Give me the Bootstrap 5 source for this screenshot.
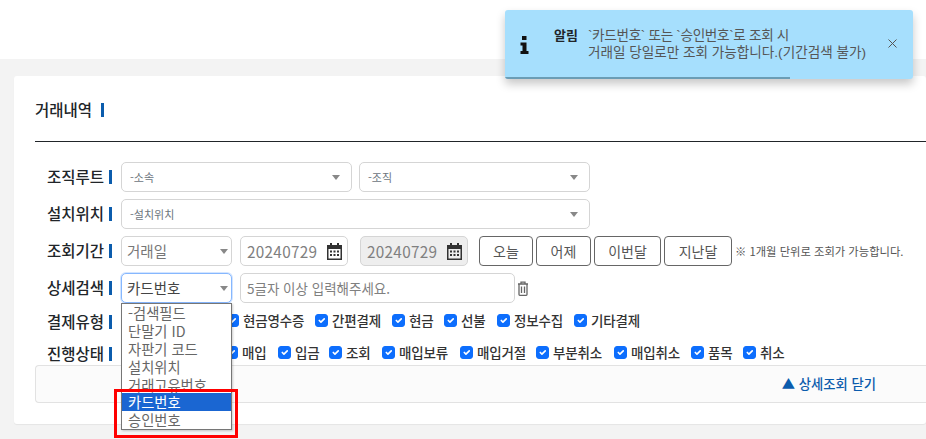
<!DOCTYPE html>
<html lang="ko">
<head>
<meta charset="utf-8">
<title>거래내역</title>
<link href="https://cdn.jsdelivr.net/npm/bootstrap@5.3.0/dist/css/bootstrap.min.css" rel="stylesheet">
<style>
html,body{height:439px;overflow:hidden}
body{background:#f3f3f3;font-family:"Noto Sans CJK KR","Liberation Sans",sans-serif;color:#212529;position:relative}
.top-strip{height:59px;background:#fff}
.panel{margin:17px 0 0 14px;background:#fff;height:348px;padding:0 0 0 21px;border-radius:3px;box-shadow:0 1px 1px rgba(0,0,0,.06)}
.panel-head{height:66px;border-bottom:1px solid #212529;font-size:15.5px;font-weight:500;margin-bottom:20px;padding-top:2px;display:flex;align-items:center}
.bar{display:inline-block;width:3px;height:14px;background:#0b5cad;margin-left:9px;flex:none}
.field-row{display:flex;align-items:center;height:30px;margin-bottom:7px}
.lbl{width:78px;flex:none;font-size:15.5px;font-weight:500;margin-right:8px;white-space:nowrap;display:flex;align-items:center;justify-content:flex-end;padding-right:1px}
.lbl .bar{margin-left:5px}
.fsel,.fipt{height:30px;min-height:30px;border:1px solid #d5d5d5;border-radius:5px;font-size:11px;color:#6c757d;padding:0 8px;line-height:26px;flex:none;display:flex;align-items:center;justify-content:space-between;background:#fff}
.fsel::after{content:"";border-left:4px solid transparent;border-right:4px solid transparent;border-top:5px solid #888;margin-right:3px}
.w-231{width:231px}.w-469{width:469px}.w-111{width:111px}.w-108{width:108px}.w-275{width:275px}
.f-lg{font-size:14.5px;color:#777;padding:0 0 0 5px}
.active-sel{border-color:#86b7fe;box-shadow:0 0 0 1px rgba(13,110,253,.18);color:#444}
.gap8{margin-left:8px}
.gap7{margin-left:7px}
.gap12{margin-left:12px}
.gap11{margin-left:11px}
.fipt{font-size:15.3px;color:#808080;letter-spacing:.3px;padding:0 4px 0 6px}
.fipt.hint{font-size:13.5px;letter-spacing:0}
.off{background:#eee}
.tbtn{height:30px;border:1px solid #666;border-radius:4px;background:#fff;color:#555;font-size:14px;padding:0;flex:none;margin-right:3px}
.note{font-size:11.3px;color:#555;white-space:nowrap}
.trash{margin-left:2px;flex:none}
.chk-row{display:flex;align-items:center;height:23px;margin:0 0 9px}
.chk-row.second{margin:0}
.chk{display:flex;align-items:center;font-size:13.5px;font-weight:500;color:#333;white-space:nowrap;letter-spacing:-.2px;position:absolute}
.chk-wrap{position:relative;height:23px;flex:1}
.chk .form-check-input{width:13px;height:13px;margin:0 4px 0 0;border-radius:3px;flex:none}
.close-bar{height:38px;border:1px solid #e2e2e2;border-right:0;border-radius:4px 0 0 4px;background:#fbfbfb;display:flex;align-items:center;justify-content:flex-end;padding-right:50px;font-size:13.3px;font-weight:500;color:#0b5cad}
.opt-list{position:absolute;left:121px;top:303px;width:111px;height:127px;background:#fff;border:1px solid #767676;font-size:14.3px;color:#666;z-index:3;box-shadow:1px 1px 2px rgba(0,0,0,.2)}
.opt-list div{height:17.9px;line-height:17.9px;padding-left:6px;white-space:nowrap}
.opt-list .sel{background:#1a66d2;color:#fff}
.red-box{position:absolute;left:114px;top:389px;width:124px;height:49px;border:3px solid #f00;z-index:4}
.notice{position:absolute;left:505px;top:10px;width:408px;height:69px;background:#a6dffd;border-radius:3px;box-shadow:0 5px 10px rgba(0,0,0,.22);z-index:5;overflow:hidden;display:flex;align-items:center}
.notice-prog{position:absolute;left:0;bottom:0;width:285px;height:2px;background:#6b9db5}
.notice-icon{margin-left:15px;flex:none}
.notice-title{margin-left:25px;font-size:13px;font-weight:700;color:#212529;flex:none;align-self:flex-start;margin-top:16px;line-height:18px}
.notice-msg{margin-left:10px;font-family:"Liberation Sans","Noto Sans CJK KR",sans-serif;font-size:13.6px;line-height:17px;color:#555;white-space:nowrap;align-self:flex-start;margin-top:17px}
.msg-tight{letter-spacing:-.33px}
.notice-x{position:absolute;right:16px;top:29px}
</style>
</head>
<body>
<div class="top-strip"></div>
<div class="panel">
  <div class="panel-head">거래내역<span class="bar"></span></div>
  <div class="field-row">
    <div class="lbl">조직루트<span class="bar"></span></div>
    <div class="fsel w-231">-소속</div>
    <div class="fsel w-231 gap7">-조직</div>
  </div>
  <div class="field-row">
    <div class="lbl">설치위치<span class="bar"></span></div>
    <div class="fsel w-469">-설치위치</div>
  </div>
  <div class="field-row">
    <div class="lbl">조회기간<span class="bar"></span></div>
    <div class="fsel w-111 f-lg">거래일</div>
    <div class="fipt w-108 gap8">20240729
      <svg width="17" height="17" viewBox="0 0 17 17"><path fill="#333" d="M1 2h3V0h2v2h5V0h2v2h3v15H1zM2.500 6v9.500h12V6z"/><path fill="#333" d="M4 7.500h2v2H4zM7.500 7.500h2v2h-2zM11 7.500h2v2h-2zM4 11h2v2H4zM7.500 11h2v2h-2zM11 11h2v2h-2z"/></svg>
    </div>
    <div class="fipt w-108 off gap12">20240729
      <svg width="17" height="17" viewBox="0 0 17 17"><path fill="#333" d="M1 2h3V0h2v2h5V0h2v2h3v15H1zM2.500 6v9.500h12V6z"/><path fill="#333" d="M4 7.500h2v2H4zM7.500 7.500h2v2h-2zM11 7.500h2v2h-2zM4 11h2v2H4zM7.500 11h2v2h-2zM11 11h2v2h-2z"/></svg>
    </div>
    <button type="button" class="btn tbtn gap11" style="width:54px">오늘</button>
    <button type="button" class="btn tbtn" style="width:55px">어제</button>
    <button type="button" class="btn tbtn" style="width:67px">이번달</button>
    <button type="button" class="btn tbtn" style="width:68px">지난달</button>
    <span class="note">※ 1개월 단위로 조회가 가능합니다.</span>
  </div>
  <div class="field-row">
    <div class="lbl">상세검색<span class="bar"></span></div>
    <div class="fsel w-111 f-lg active-sel">카드번호</div>
    <div class="fipt hint w-275 gap8">5글자 이상 입력해주세요.</div>
    <svg class="trash" width="12" height="15" viewBox="0 0 12 15"><path fill="none" stroke="#666" stroke-width="1.300" d="M1 3h10M4 3V1.200h4V3M2 3v10.500a.8.8 0 0 0 .8.8h6.400a.8.8 0 0 0 .8-.8V3M4.500 5.500v6.500M7.500 5.500v6.500"/></svg>
  </div>
  <div class="chk-row">
    <div class="lbl">결제유형<span class="bar"></span></div>
    <div class="chk-wrap">
      <label class="chk" style="left:105px"><input class="form-check-input" type="checkbox" checked>현금영수증</label>
      <label class="chk" style="left:194px"><input class="form-check-input" type="checkbox" checked>간편결제</label>
      <label class="chk" style="left:271px"><input class="form-check-input" type="checkbox" checked>현금</label>
      <label class="chk" style="left:323px"><input class="form-check-input" type="checkbox" checked>선불</label>
      <label class="chk" style="left:376px"><input class="form-check-input" type="checkbox" checked>정보수집</label>
      <label class="chk" style="left:453px"><input class="form-check-input" type="checkbox" checked>기타결제</label>
    </div>
  </div>
  <div class="chk-row second">
    <div class="lbl">진행상태<span class="bar"></span></div>
    <div class="chk-wrap">
      <label class="chk" style="left:104px"><input class="form-check-input" type="checkbox" checked>매입</label>
      <label class="chk" style="left:157px"><input class="form-check-input" type="checkbox" checked>입금</label>
      <label class="chk" style="left:208px"><input class="form-check-input" type="checkbox" checked>조회</label>
      <label class="chk" style="left:261px"><input class="form-check-input" type="checkbox" checked>매입보류</label>
      <label class="chk" style="left:339px"><input class="form-check-input" type="checkbox" checked>매입거절</label>
      <label class="chk" style="left:415px"><input class="form-check-input" type="checkbox" checked>부분취소</label>
      <label class="chk" style="left:493px"><input class="form-check-input" type="checkbox" checked>매입취소</label>
      <label class="chk" style="left:570px"><input class="form-check-input" type="checkbox" checked>품목</label>
      <label class="chk" style="left:622px"><input class="form-check-input" type="checkbox" checked>취소</label>
    </div>
  </div>
  <div class="close-bar">▲ 상세조회 닫기</div>
</div>
<div class="opt-list">
  <div>-검색필드</div><div>단말기 ID</div><div>자판기 코드</div><div>설치위치</div><div>거래고유번호</div><div class="sel">카드번호</div><div>승인번호</div>
</div>
<div class="red-box"></div>
<div class="notice">
  <svg class="notice-icon" width="9" height="18" viewBox="0 0 9 18"><path fill="#111" d="M2 0h4.500v4H2zM.5 6.500h6v8.500H8.500v3H.5v-3h2V9.500h-2z"/></svg>
  <div class="notice-title">알림</div>
  <div class="notice-msg"><span class="msg-tight">`카드번호` 또는 `승인번호`로 조회 시</span><br>거래일 당일로만 조회 가능합니다.(기간검색 불가)</div>
  <svg class="notice-x" width="9" height="9" viewBox="0 0 9 9"><path stroke="#555" stroke-width="1" d="M.5.500l8 8M8.500.500l-8 8"/></svg>
  <div class="notice-prog"></div>
</div>
<script src="https://cdn.jsdelivr.net/npm/bootstrap@5.3.0/dist/js/bootstrap.bundle.min.js"></script>
</body>
</html>
